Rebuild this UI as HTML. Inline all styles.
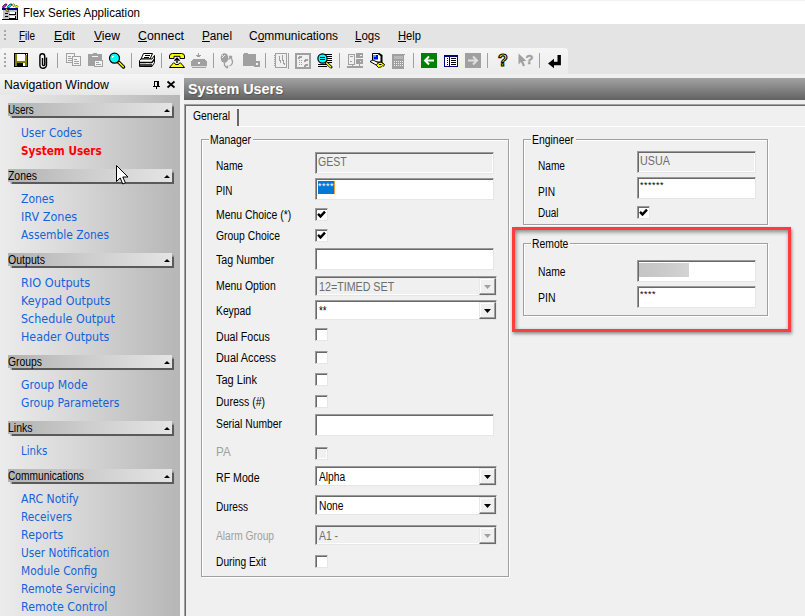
<!DOCTYPE html>
<html><head><meta charset="utf-8"><title>Flex Series Application</title>
<style>
*{box-sizing:border-box;margin:0;padding:0}
html,body{width:805px;height:616px;overflow:hidden;background:#f0f0f0;font-family:"Liberation Sans",sans-serif;font-size:12px;color:#000}
.a{position:absolute}
.t{position:absolute;white-space:nowrap;line-height:14px;transform-origin:0 50%}
#title{left:0;top:0;width:805px;height:24px;background:#fff;border-top:1px solid #f2f2f2}
#menu{left:0;top:24px;width:805px;height:24px;background:#e4e4e4}
#tool{left:0;top:48px;width:805px;height:26px;background:#e4e4e4}
#toolin{left:0;top:48px;width:568px;height:26px;background:linear-gradient(180deg,#f6f6f6,#ebebeb);border-radius:3px 3px 0 0}
#nav{left:0;top:95px;width:180px;height:521px;background:linear-gradient(90deg,#ececec 0%,#d8d8d8 40%,#b6b6b6 100%)}
#navhead{left:0;top:74px;width:180px;height:21px;background:linear-gradient(180deg,#f6f6f6,#e6e6e6)}
.sec{position:absolute;left:8px;width:164px;height:13px;background:linear-gradient(90deg,#b2b2b2 0%,#cecece 50%,#e4e4e4 100%);box-shadow:1.5px 1.5px 1px #5a5a5a}
.sec span{position:absolute;left:0;top:0;font-size:12px;line-height:14px;transform-origin:0 50%;white-space:nowrap}
.sec i{position:absolute;right:2px;top:6px;width:6px;height:3px;background:#000;clip-path:polygon(0 100%,50% 0,100% 100%)}
.lk{position:absolute;left:21px;font-family:"DejaVu Sans","Liberation Sans",sans-serif;font-size:12px;line-height:14px;color:#1463d8;white-space:nowrap;transform-origin:0 50%;transform:scaleX(.893)}
.sel{color:#f00;font-weight:bold;transform:scaleX(.881)}
#hdr{left:184px;top:78px;width:621px;height:22px;background:linear-gradient(180deg,#a3a3a3,#626262)}
#hdr span{position:absolute;left:4px;top:2px;font-weight:bold;font-size:14.4px;line-height:18px;color:#fff;text-shadow:1px 1px 1px rgba(0,0,0,.25)}
.lb{position:absolute;font-size:12px;line-height:14px;white-space:nowrap;transform-origin:0 50%}
.dis{color:#a0a0a0}
.tx,.cb,.cmb{position:absolute;background:#fff;border:1px solid;border-color:#9a9a9a #e6e6e6 #e6e6e6 #9a9a9a;box-shadow:inset 1px 1px 0 #696969,inset -1px -1px 0 #fff}
.tx.d,.cb.d,.cmb.d{background:#f0f0f0}
.tx span{position:absolute;left:2px;top:2px;font-size:12px;line-height:14px;color:#6d6d6d;transform-origin:0 50%;white-space:nowrap}
.cb{width:13px;height:13px}
.cb svg{position:absolute;left:1px;top:1px}
.cmb span{position:absolute;left:3px;top:3px;font-size:12px;line-height:14px;white-space:nowrap;transform-origin:0 50%}
.cmb.d span{color:#6d6d6d}
.cmb b{position:absolute;right:0;top:1px;width:17px;height:17px;background:#f0f0f0;border:1px solid;border-color:#e8e8e8 #696969 #696969 #e8e8e8;box-shadow:inset -1px -1px 0 #a0a0a0,inset 1px 1px 0 #fff}
.cmb b:after{content:"";position:absolute;left:4px;top:6px;width:7px;height:4px;background:#000;clip-path:polygon(0 0,100% 0,50% 100%)}
.cmb.d b:after{background:#a0a0a0}
.gb{position:absolute;border:1px solid #a0a0a0;box-shadow:1px 1px 0 #fff,inset 1px 1px 0 #fff}
.gbl{position:absolute;background:#f0f0f0;padding:0 0 0 1px;font-size:12px;line-height:14px;height:14px;overflow:hidden;white-space:nowrap}
.gbl span{display:inline-block;transform-origin:0 50%}
#split{left:180px;top:74px;width:4px;height:542px;background:#f4f4f4}
#tabc{left:184px;top:104px;width:640px;height:530px;border:1px solid #a0a0a0;box-shadow:inset 1px 1px 0 #696969}
#tab{left:186px;top:109px;width:53px;height:17px;border-right:2px solid #696969}
#tab:after{content:"";position:absolute;left:53px;top:17px;width:600px;height:1px;background:#fff}
#tab span{position:absolute;left:6.7px;top:0;font-size:12px;line-height:14px;transform-origin:0 50%}
.selb{position:absolute;left:2px;top:2px;width:17px;height:13px;background:#0078d7}
.caret{position:absolute;left:18px;top:2px;width:1px;height:13px;background:#e8a040}
.pw{font-size:9px!important;letter-spacing:.5px;color:#000!important;top:0!important;left:2px!important}
.blur{position:absolute;left:1px;top:2px;width:50px;height:14px;background:linear-gradient(90deg,#c6c4c4,#cacaca 50%,#d4d4d4)}
#red{left:512px;top:227px;width:279px;height:105px;border:3px solid #fb3d3d;box-shadow:1px 2px 3px rgba(0,0,0,.4),inset 1px 2px 4px rgba(0,0,0,.45)}
</style></head><body>
<div class="a" id="title"></div>
<div class="a" id="menu"></div>
<div class="a" id="tool"></div>
<div class="a" id="toolin"></div>
<div class="a" id="navhead"></div>
<div class="a" id="nav"></div>
<div class="a" id="split"></div>
<div class="a" id="hdr"><span>System Users</span></div>
<svg class="a" style="left:0;top:48px" width="570" height="25" viewBox="0 48 570 25">
<g shape-rendering="crispEdges">
<!-- grippers -->
<g fill="#a8a8a8"><rect x="4" y="53" width="2" height="2"/><rect x="4" y="57" width="2" height="2"/><rect x="4" y="61" width="2" height="2"/><rect x="4" y="65" width="2" height="2"/></g>
<!-- separators -->
<g fill="#a0a0a0"><rect x="57" y="53" width="1" height="15"/><rect x="131" y="53" width="1" height="15"/><rect x="161" y="53" width="1" height="15"/><rect x="213" y="53" width="1" height="15"/><rect x="265" y="53" width="1" height="15"/><rect x="339" y="53" width="1" height="15"/><rect x="413" y="53" width="1" height="15"/><rect x="487" y="53" width="1" height="15"/><rect x="539" y="53" width="1" height="15"/></g>
<!-- save -->
<rect x="14" y="53" width="14" height="14" fill="#000"/><rect x="15" y="54" width="2" height="12" fill="#808000"/><rect x="25" y="55" width="2" height="11" fill="#808000"/><rect x="17" y="61" width="8" height="2" fill="#808000"/><rect x="17" y="54" width="8" height="7" fill="#fff"/><rect x="26" y="54" width="1" height="1" fill="#fff"/><rect x="23" y="63" width="2" height="3" fill="#fff"/>
<!-- copy disabled -->
<rect x="66.5" y="53.5" width="8" height="9" fill="#f4f4f4" stroke="#a0a0a0"/><rect x="68" y="56" width="3" height="1" fill="#a0a0a0"/><rect x="68" y="58" width="5" height="1" fill="#a0a0a0"/><rect x="68" y="60" width="5" height="1" fill="#a0a0a0"/>
<rect x="72.5" y="56.5" width="8" height="9" fill="#f4f4f4" stroke="#a0a0a0"/><rect x="74" y="59" width="3" height="1" fill="#a0a0a0"/><rect x="74" y="61" width="5" height="1" fill="#a0a0a0"/><rect x="74" y="63" width="5" height="1" fill="#a0a0a0"/>
<!-- paste disabled -->
<rect x="88" y="54" width="14" height="12" fill="#a0a0a0"/><rect x="93" y="53" width="4" height="1" fill="#a0a0a0"/><rect x="92" y="56" width="6" height="1" fill="#f4f4f4"/><rect x="94.5" y="60.5" width="8" height="6" fill="#f4f4f4" stroke="#a0a0a0"/><rect x="96" y="62" width="3" height="1" fill="#a0a0a0"/><rect x="96" y="64" width="5" height="1" fill="#a0a0a0"/>
<!-- modem disabled -->
<g fill="#a0a0a0"><rect x="198" y="53" width="1" height="4"/><rect x="196" y="55" width="5" height="1"/><rect x="197" y="56" width="3" height="1"/><rect x="193" y="59" width="12" height="1"/><rect x="192" y="60" width="14" height="1"/><rect x="191" y="61" width="16" height="6"/><rect x="192" y="67" width="14" height="1"/></g><rect x="198" y="62" width="2" height="2" fill="#f4f4f4"/><rect x="191" y="66" width="16" height="1" fill="#dcdcdc"/>
<!-- folder disabled -->
<g fill="#a0a0a0"><rect x="244" y="53" width="4" height="1"/><rect x="243" y="54" width="13" height="12"/><rect x="254" y="61" width="6" height="6"/></g><rect x="256" y="63" width="2" height="2" fill="#f4f4f4"/>
<!-- notebook disabled -->
<rect x="275.5" y="53.5" width="11" height="14" fill="#f0f0f0" stroke="#a0a0a0"/><g fill="#a0a0a0"><rect x="274" y="55" width="2" height="1"/><rect x="274" y="57" width="2" height="1"/><rect x="274" y="59" width="2" height="1"/><rect x="274" y="61" width="2" height="1"/><rect x="274" y="63" width="2" height="1"/><rect x="274" y="65" width="2" height="1"/><rect x="288" y="53" width="1" height="16"/><rect x="279" y="56" width="1" height="5"/><rect x="280" y="60" width="1" height="3"/><rect x="282" y="55" width="1" height="6"/><rect x="283" y="60" width="1" height="4"/><rect x="284" y="63" width="1" height="2"/></g>
<!-- square arrows disabled -->
<rect x="296" y="54" width="14" height="14" fill="#f0f0f0" stroke="#a0a0a0" stroke-width="2"/><g fill="#a0a0a0"><rect x="295" y="53" width="16" height="2"/><rect x="299" y="56" width="3" height="2"/><rect x="298" y="57" width="2" height="2"/><rect x="305" y="59" width="3" height="2"/><rect x="304" y="60" width="2" height="2"/><rect x="305" y="64" width="3" height="2"/><rect x="304" y="65" width="2" height="2"/><rect x="299" y="60" width="1" height="1"/><rect x="301" y="60" width="1" height="1"/><rect x="299" y="62" width="1" height="1"/><rect x="301" y="62" width="1" height="1"/><rect x="299" y="64" width="1" height="1"/><rect x="301" y="64" width="1" height="1"/></g>
<!-- computers disabled -->
<g fill="#a0a0a0"><rect x="356" y="53" width="7" height="11"/><rect x="347" y="66" width="16" height="2"/><rect x="352" y="64" width="1" height="2"/><rect x="359" y="64" width="1" height="2"/></g><rect x="348.5" y="54.5" width="6" height="10" fill="#f0f0f0" stroke="#a0a0a0"/><rect x="350" y="56" width="3" height="1" fill="#a0a0a0"/><rect x="350" y="61" width="2" height="1" fill="#a0a0a0"/><rect x="360" y="55" width="2" height="1" fill="#f0f0f0"/><rect x="356" y="58" width="7" height="1" fill="#f0f0f0"/><rect x="360" y="61" width="1" height="1" fill="#f0f0f0"/>
<!-- calculator disabled -->
<rect x="392" y="54" width="13" height="15" fill="#a0a0a0"/><rect x="394" y="56" width="9" height="3" fill="#b8b8b8"/><g fill="#f0f0f0"><rect x="394" y="61" width="1" height="1"/><rect x="396" y="61" width="1" height="1"/><rect x="398" y="61" width="1" height="1"/><rect x="400" y="61" width="1" height="1"/><rect x="402" y="61" width="1" height="1"/><rect x="394" y="63" width="1" height="1"/><rect x="396" y="63" width="1" height="1"/><rect x="398" y="63" width="1" height="1"/><rect x="400" y="63" width="1" height="1"/><rect x="402" y="63" width="1" height="1"/><rect x="394" y="65" width="1" height="1"/><rect x="396" y="65" width="1" height="1"/><rect x="398" y="65" width="1" height="1"/><rect x="400" y="65" width="1" height="1"/><rect x="402" y="65" width="1" height="1"/><rect x="404" y="55" width="1" height="14"/></g>
<!-- back green -->
<rect x="421" y="53" width="16" height="15" fill="#008000"/>
<!-- list -->
<rect x="444.5" y="55.5" width="13" height="11" fill="#fff" stroke="#000080"/><rect x="444" y="55" width="14" height="2" fill="#000080"/><g fill="#000"><rect x="447" y="58" width="1" height="1"/><rect x="447" y="60" width="1" height="1"/><rect x="447" y="62" width="1" height="1"/><rect x="447" y="64" width="1" height="1"/><rect x="449" y="57" width="1" height="9"/><rect x="451" y="58" width="5" height="1"/><rect x="451" y="60" width="5" height="1"/><rect x="451" y="62" width="5" height="1"/><rect x="451" y="64" width="5" height="1"/></g>
<!-- forward gray -->
<rect x="465" y="53" width="16" height="15" fill="#a0a0a0"/>
</g>
<!-- arrows -->
<path d="M434 60.5h-9m4-4l-4 4l4 4" stroke="#fff" stroke-width="2" fill="none"/>
<path d="M468 60.5h9m-4-4l4 4l-4 4" stroke="#e0e0e0" stroke-width="2" fill="none"/>
<!-- paperclip -->
<path d="M46.5 57.5v7.5a3.3 3.3 0 0 1-6.6 0v-8.8a2.4 2.4 0 0 1 4.8 0v8.3a1 1 0 0 1-2.2 0v-6.5" stroke="#000" stroke-width="1.4" fill="none"/>
<!-- magnifier -->
<path d="M118.5 62l5 5" stroke="#000" stroke-width="3.4" stroke-linecap="round"/><path d="M119 62.5l4.3 4.3" stroke="#ffff00" stroke-width="1.5" stroke-linecap="round"/><circle cx="114.5" cy="58.2" r="5" fill="#00ffff" stroke="#000" stroke-width="1.2"/><rect x="112" y="56" width="2" height="1" fill="#fff"/><rect x="112" y="57" width="1" height="1" fill="#fff"/>
<!-- printer -->
<path d="M143.5 53.5h9l-2.5 5.5h-9z" fill="#fff" stroke="#000"/><path d="M145 55.5h5M144 57.5h5" stroke="#000"/><path d="M139.5 60.5l1.5-1.5h11l2.5-3.5v7l-2.5 4h-12.5z" fill="#fff" stroke="#000"/><path d="M139.5 62.5h12.5M139.5 65h12.5M152 62.5l2.5-3.5" stroke="#000" stroke-width="1.3" fill="none"/><rect x="140" y="66" width="12" height="1" fill="#000"/><rect x="146" y="63" width="3" height="1" fill="#ffff00"/>
<!-- phone -->
<path d="M169.5 58.5v-2.5q0-2.5 3-2.5h9q3 0 3 2.5v2.5h-4.5v-2.2h-6v2.2z" fill="#ffff00" stroke="#000"/><path d="M177 58.5v4.5M174.5 60.8l2.5-2.5l2.5 2.5" stroke="#000" stroke-width="1.4" fill="none"/><path d="M169.5 67.5l2.5-3.2l1.5-1.3h1l1 1.5h3l1-1.5h1l1.5 1.3l2.5 3.2z" fill="#ffff00" stroke="#000"/>
<!-- balloon disabled -->
<ellipse cx="224.5" cy="58" rx="3.8" ry="4.8" fill="#a0a0a0"/><path d="M224.5 62.5v3l2.5 2M231 57l-2.5 2.5M229 56.5h2.5v2.5M231.5 59c2 2.5 1 6-2 7M225.5 67.5h2v-2" stroke="#a0a0a0" stroke-width="1.3" fill="none"/><rect x="222" y="55" width="1" height="1" fill="#eee"/><rect x="224" y="55" width="1" height="1" fill="#eee"/><rect x="223" y="56" width="1" height="1" fill="#eee"/><rect x="222" y="57" width="1" height="1" fill="#eee"/>
<!-- search text -->
<g stroke="#000" stroke-width="1" shape-rendering="crispEdges"><path d="M324 54.5h8M326 56.5h6M327 58.5h5M327 60.5h5M326 62.5h6M318 64.5h10M318 66.5h9"/></g><path d="M326 62.5l5 4.5" stroke="#000" stroke-width="3" stroke-linecap="round"/><path d="M326.5 63l4.3 3.900" stroke="#ffff00" stroke-width="1.4" stroke-linecap="round"/><circle cx="322.5" cy="58.5" r="4.6" fill="#00ffff" stroke="#000" stroke-width="1.2"/><path d="M320 57.5h5M320 59.5h5" stroke="#000" shape-rendering="crispEdges"/>
<!-- computer with key -->
<path d="M372.5 53.5h6l3 2v6.5h-6l-3-2z" fill="#fff" stroke="#000"/><path d="M373.5 55h4.5v4.5h-4.5z" fill="#0000ff"/><rect x="374" y="55" width="2" height="2" fill="#00c0ff"/><path d="M378.5 53.5l3 2v6.5" fill="none" stroke="#000" stroke-width="2"/><path d="M370 61.5l3-1.5l7 3.5l-3 2z" fill="#fff" stroke="#000"/><path d="M376.5 65.5c0-2.5 5-4.5 6.5-2.5c1.5 2.5-2 4.5-4.5 4.5z" fill="#ffff00" stroke="#000"/><path d="M379 64.5h2.5" stroke="#000"/><path d="M381 62l3.5 2.5l-1 2" fill="#ffff00" stroke="#000"/>
<!-- question -->
<text x="498" y="66" font-family="Liberation Sans, sans-serif" font-weight="bold" font-size="16" fill="#ffff00" stroke="#000" stroke-width="1.1">?</text>
<!-- pointer + ? disabled -->
<path d="M518.5 53.5v11l2.5-2.5l2 4.5l2-1l-2-4.5h3.5z" fill="#a0a0a0"/><text x="525.5" y="64" font-family="Liberation Sans, sans-serif" font-weight="bold" font-size="13" fill="#a0a0a0" stroke="#a0a0a0" stroke-width=".4">?</text>
<!-- enter -->
<path d="M559.2 55v8.5h-6.5" stroke="#000" stroke-width="3.4" fill="none"/><path d="M548 63.5l6-4.8v9.6z" fill="#000"/>
</svg>

<svg class="a" style="left:150px;top:78px" width="28" height="14" viewBox="150 78 28 14"><g shape-rendering="crispEdges" fill="#000"><rect x="154" y="81" width="5" height="1"/><rect x="154" y="81" width="1" height="5"/><rect x="157" y="81" width="2" height="5"/><rect x="153" y="86" width="7" height="1"/><rect x="156" y="87" width="1" height="2"/></g><path d="M167.5 81.5l7 6m0-6l-7 6" stroke="#000" stroke-width="1.8" fill="none"/></svg>
<svg class="a" style="left:0;top:0" width="24" height="48" viewBox="0 0 24 48" shape-rendering="crispEdges"><g fill="#a8a8a8"><rect x="4" y="30" width="2" height="2"/><rect x="4" y="34" width="2" height="2"/><rect x="4" y="38" width="2" height="2"/></g><rect x="2" y="8" width="16" height="12" fill="#000"/><rect x="2" y="8" width="15" height="11" fill="#fff"/><rect x="3" y="9" width="14" height="10" fill="#c0c0c0"/><rect x="2" y="8" width="16" height="2" fill="#000080"/><rect x="10" y="12" width="5" height="2" fill="#fff"/><rect x="10" y="16" width="5" height="2" fill="#fff"/><rect x="5" y="13" width="3" height="1" fill="#000"/><rect x="5" y="16" width="3" height="1" fill="#000"/><rect x="9" y="14" width="6" height="1" fill="#000"/><rect x="9" y="18" width="6" height="1" fill="#000"/><rect x="15" y="12" width="1" height="3" fill="#000"/><rect x="15" y="16" width="1" height="3" fill="#000"/><g shape-rendering="auto" stroke="#000" stroke-width=".7" stroke-linejoin="round"><path d="M2.6 6.3l2.5-2.3h1.6v1.2l-2.5 2.3h-1.6z" fill="#ff00ff"/><path d="M7.6 6.3l2.5-2.3h1.6v1.2l-2.5 2.3h-1.6z" fill="#00ffff"/><path d="M5.6 8.7l1.3-.6l1.6 3.1l-.9.9l-1.400-1.6z" fill="#ffff00"/><path d="M13.5 3.7l1.5 1.5l-1.5 1.5l-1.5-1.5z M16.6 5.1l1.5 1.5l-1.5 1.5l-1.5-1.5z" fill="#ffff00" stroke-width=".5"/></g></svg>

<div class="t" style="left:23px;top:6px;transform:scaleX(0.964)">Flex Series Application</div>
<div class="t" style="left:19px;top:29px;transform:scaleX(0.827)"><u>F</u>ile</div>
<div class="t" style="left:54px;top:29px;transform:scaleX(1.015)"><u>E</u>dit</div>
<div class="t" style="left:94px;top:29px;transform:scaleX(1.008)"><u>V</u>iew</div>
<div class="t" style="left:138px;top:29px;transform:scaleX(1.029)"><u>C</u>onnect</div>
<div class="t" style="left:202px;top:29px;transform:scaleX(0.977)"><u>P</u>anel</div>
<div class="t" style="left:249px;top:29px;transform:scaleX(0.996)">C<u>o</u>mmunications</div>
<div class="t" style="left:355px;top:29px;transform:scaleX(0.96)"><u>L</u>ogs</div>
<div class="t" style="left:398px;top:29px;transform:scaleX(0.932)"><u>H</u>elp</div>
<div class="t" style="left:4px;top:78px;transform:scaleX(1.022)">Navigation Window</div>
<div class="sec" style="top:103px"><span style="transform:scaleX(0.82)">Users</span><i></i></div>
<div class="lk" style="top:126px;transform:scaleX(0.895)">User Codes</div>
<div class="lk sel" style="top:144px;transform:scaleX(0.876)">System Users</div>
<div class="sec" style="top:169px"><span style="transform:scaleX(0.869)">Zones</span><i></i></div>
<div class="lk" style="top:192px;transform:scaleX(0.899)">Zones</div>
<div class="lk" style="top:210px;transform:scaleX(0.936)">IRV Zones</div>
<div class="lk" style="top:228px;transform:scaleX(0.891)">Assemble Zones</div>
<div class="sec" style="top:253px"><span style="transform:scaleX(0.88)">Outputs</span><i></i></div>
<div class="lk" style="top:276px;transform:scaleX(0.947)">RIO Outputs</div>
<div class="lk" style="top:294px;transform:scaleX(0.929)">Keypad Outputs</div>
<div class="lk" style="top:312px;transform:scaleX(0.932)">Schedule Output</div>
<div class="lk" style="top:330px;transform:scaleX(0.925)">Header Outputs</div>
<div class="sec" style="top:355px"><span style="transform:scaleX(0.864)">Groups</span><i></i></div>
<div class="lk" style="top:378px;transform:scaleX(0.912)">Group Mode</div>
<div class="lk" style="top:396px;transform:scaleX(0.902)">Group Parameters</div>
<div class="sec" style="top:421px"><span style="transform:scaleX(0.875)">Links</span><i></i></div>
<div class="lk" style="top:444px;transform:scaleX(0.853)">Links</div>
<div class="sec" style="top:469px"><span style="transform:scaleX(0.85)">Communications</span><i></i></div>
<div class="lk" style="top:492px;transform:scaleX(0.908)">ARC Notify</div>
<div class="lk" style="top:510px;transform:scaleX(0.877)">Receivers</div>
<div class="lk" style="top:528px;transform:scaleX(0.917)">Reports</div>
<div class="lk" style="top:546px;transform:scaleX(0.883)">User Notification</div>
<div class="lk" style="top:564px;transform:scaleX(0.888)">Module Config</div>
<div class="lk" style="top:582px;transform:scaleX(0.895)">Remote Servicing</div>
<div class="lk" style="top:600px;transform:scaleX(0.924)">Remote Control</div>
<div class="a" id="tabc"></div>
<div class="a" id="tab"><span style="transform:scaleX(0.866)">General</span></div>
<div class="gb" style="left:201px;top:139px;width:308px;height:438px"></div>
<div class="gbl" style="left:209px;top:133px;width:44px"><span style="transform:scaleX(0.865)">Manager</span></div>
<div class="gb" style="left:523px;top:139px;width:245px;height:86px"></div>
<div class="gbl" style="left:531px;top:133px;width:44.7px"><span style="transform:scaleX(0.868)">Engineer</span></div>
<div class="gb" style="left:523px;top:243px;width:245px;height:73px"></div>
<div class="gbl" style="left:531px;top:237px;width:39.3px"><span style="transform:scaleX(0.864)">Remote</span></div>
<div class="lb" style="left:216px;top:159px;transform:scaleX(0.843)">Name</div>
<div class="tx d" style="left:315px;top:152px;width:179px;height:22px"><span style="transform:scaleX(0.878)">GEST</span></div>
<div class="lb" style="left:216px;top:184px;transform:scaleX(0.824)">PIN</div>
<div class="tx" style="left:315px;top:178px;width:179px;height:22px"><em class="selb"></em><em class="caret"></em><span class="pw" style="color:#fff!important">****</span></div>
<div class="lb" style="left:216px;top:208px;transform:scaleX(0.868)">Menu Choice (*)</div>
<div class="cb" style="left:315px;top:208px"><svg width="9" height="9" viewBox="0 0 9 9"><path d="M1 3.8l2.5 2.6l4.5-4.7" stroke="#000" stroke-width="2.4" fill="none"/></svg></div>
<div class="lb" style="left:216px;top:229px;transform:scaleX(0.864)">Group Choice</div>
<div class="cb" style="left:315px;top:229px"><svg width="9" height="9" viewBox="0 0 9 9"><path d="M1 3.8l2.5 2.6l4.5-4.7" stroke="#000" stroke-width="2.4" fill="none"/></svg></div>
<div class="lb" style="left:216px;top:253px;transform:scaleX(0.892)">Tag Number</div>
<div class="tx" style="left:315px;top:248px;width:179px;height:22px"></div>
<div class="lb" style="left:216px;top:279px;transform:scaleX(0.869)">Menu Option</div>
<div class="cmb d" style="left:315px;top:276px;width:182px;height:20px"><span style="transform:scaleX(0.891)">12=TIMED SET</span><b></b></div>
<div class="lb" style="left:216px;top:304px;transform:scaleX(0.86)">Keypad</div>
<div class="cmb" style="left:315px;top:300px;width:182px;height:20px"><span style="transform:scaleX(0.813)">**</span><b></b></div>
<div class="lb" style="left:216px;top:330px;transform:scaleX(0.885)">Dual Focus</div>
<div class="cb" style="left:315px;top:328px"></div>
<div class="lb" style="left:216px;top:351px;transform:scaleX(0.906)">Dual Access</div>
<div class="cb" style="left:315px;top:351px"></div>
<div class="lb" style="left:216px;top:373px;transform:scaleX(0.917)">Tag Link</div>
<div class="cb" style="left:315px;top:373px"></div>
<div class="lb" style="left:216px;top:395px;transform:scaleX(0.875)">Duress (#)</div>
<div class="cb" style="left:315px;top:395px"></div>
<div class="lb" style="left:216px;top:417px;transform:scaleX(0.859)">Serial Number</div>
<div class="tx" style="left:315px;top:414px;width:179px;height:22px"></div>
<div class="lb dis" style="left:216px;top:445px;transform:scaleX(0.972)">PA</div>
<div class="cb d" style="left:315px;top:447px"></div>
<div class="lb" style="left:216px;top:471px;transform:scaleX(0.883)">RF Mode</div>
<div class="cmb" style="left:315px;top:466px;width:182px;height:20px"><span style="transform:scaleX(0.853)">Alpha</span><b></b></div>
<div class="lb" style="left:216px;top:500px;transform:scaleX(0.842)">Duress</div>
<div class="cmb" style="left:315px;top:495px;width:182px;height:20px"><span style="transform:scaleX(0.854)">None</span><b></b></div>
<div class="lb dis" style="left:216px;top:529px;transform:scaleX(0.853)">Alarm Group</div>
<div class="cmb d" style="left:315px;top:525px;width:182px;height:20px"><span style="transform:scaleX(0.863)">A1 -</span><b></b></div>
<div class="lb" style="left:216px;top:555px;transform:scaleX(0.852)">During Exit</div>
<div class="cb" style="left:315px;top:555px"></div>
<div class="lb" style="left:538px;top:159px;transform:scaleX(0.843)">Name</div>
<div class="tx d" style="left:637px;top:151px;width:119px;height:22px"><span style="transform:scaleX(0.894)">USUA</span></div>
<div class="lb" style="left:538px;top:185px;transform:scaleX(0.849)">PIN</div>
<div class="tx" style="left:637px;top:177px;width:119px;height:22px"><span class="pw">******</span></div>
<div class="lb" style="left:538px;top:206px;transform:scaleX(0.83)">Dual</div>
<div class="cb" style="left:637px;top:206px"><svg width="9" height="9" viewBox="0 0 9 9"><path d="M1 3.8l2.5 2.6l4.5-4.7" stroke="#000" stroke-width="2.4" fill="none"/></svg></div>
<div class="lb" style="left:538px;top:265px;transform:scaleX(0.859)">Name</div>
<div class="tx" style="left:637px;top:260px;width:119px;height:22px"><em class="blur"></em></div>
<div class="lb" style="left:538px;top:291px;transform:scaleX(0.874)">PIN</div>
<div class="tx" style="left:637px;top:286px;width:119px;height:22px"><span class="pw">****</span></div>
<div class="a" id="red"></div>
<svg class="a" style="left:114px;top:163px" width="16" height="24" viewBox="0 0 16 24"><path d="M2.500 2.500v16l3.700-3.500l2.600 6l2.600-1.100l-2.600-5.900h5.200z" fill="#fff" stroke="#000" stroke-width="1" stroke-linejoin="miter"/></svg>

</body></html>
